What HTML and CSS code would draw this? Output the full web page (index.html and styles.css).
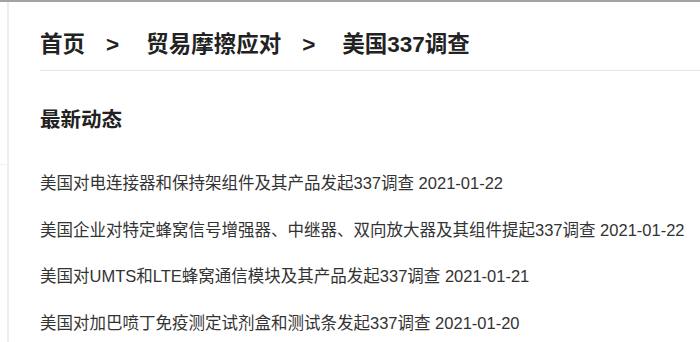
FILE: index.html
```html
<!DOCTYPE html>
<html lang="zh-CN">
<head>
<meta charset="utf-8">
<title>美国337调查</title>
<link rel="stylesheet" href="styles.css">
</head>
<body>
<div class="topbar"></div>
<div class="page">
  <aside class="side"><div class="side-box"></div></aside>
  <main class="main">
    <nav class="crumbs">
      <span>首页</span><span class="sep">&gt;</span><span>贸易摩擦应对</span><span class="sep">&gt;</span><span>美国337调查</span>
    </nav>
    <h2 class="title">最新动态</h2>
    <ul class="news">
      <li>美国对电连接器和保持架组件及其产品发起337调查 2021-01-22</li>
      <li>美国企业对特定蜂窝信号增强器、中继器、双向放大器及其组件提起337调查 2021-01-22</li>
      <li>美国对UMTS和LTE蜂窝通信模块及其产品发起337调查 2021-01-21</li>
      <li>美国对加巴喷丁免疫测定试剂盒和测试条发起337调查 2021-01-20</li>
    </ul>
  </main>
</div>
</body>
</html>
```
FILE: styles.css
```css
html, body {
  margin: 0;
  padding: 0;
  background: #fff;
  overflow: hidden;
}
body {
  font-family: "Liberation Sans", "Noto Sans CJK SC", sans-serif;
  color: #333;
  width: 700px;
  height: 342px;
}
.topbar {
  height: 2px;
  background: #a3a3a3;
}
.page {
  display: flex;
  height: 340px;
}
.side {
  width: 7px;
  flex: none;
  border-right: 2px solid #efefef;
}
.side-box {
  height: 162px;
  border-bottom: 1px solid #efefef;
}
.main {
  flex: 1;
  padding-left: 31px;
  min-width: 0;
}
.crumbs {
  margin-top: 28px;
  font-size: 22.5px;
  font-weight: bold;
  line-height: 30px;
  color: #222;
  padding-bottom: 10px;
  border-bottom: 1px solid #e6e6e6;
  white-space: nowrap;
}
.sep {
  margin: 0 27px 0 21px;
}
.title {
  margin: 35px 0 0;
  font-size: 20.5px;
  font-weight: bold;
  line-height: 28px;
  color: #222;
}
.news {
  list-style: none;
  margin: 26px 0 0;
  padding: 0;
}
.news li {
  font-size: 16.5px;
  line-height: 46.6px;
  white-space: nowrap;
  color: #333;
}
```
